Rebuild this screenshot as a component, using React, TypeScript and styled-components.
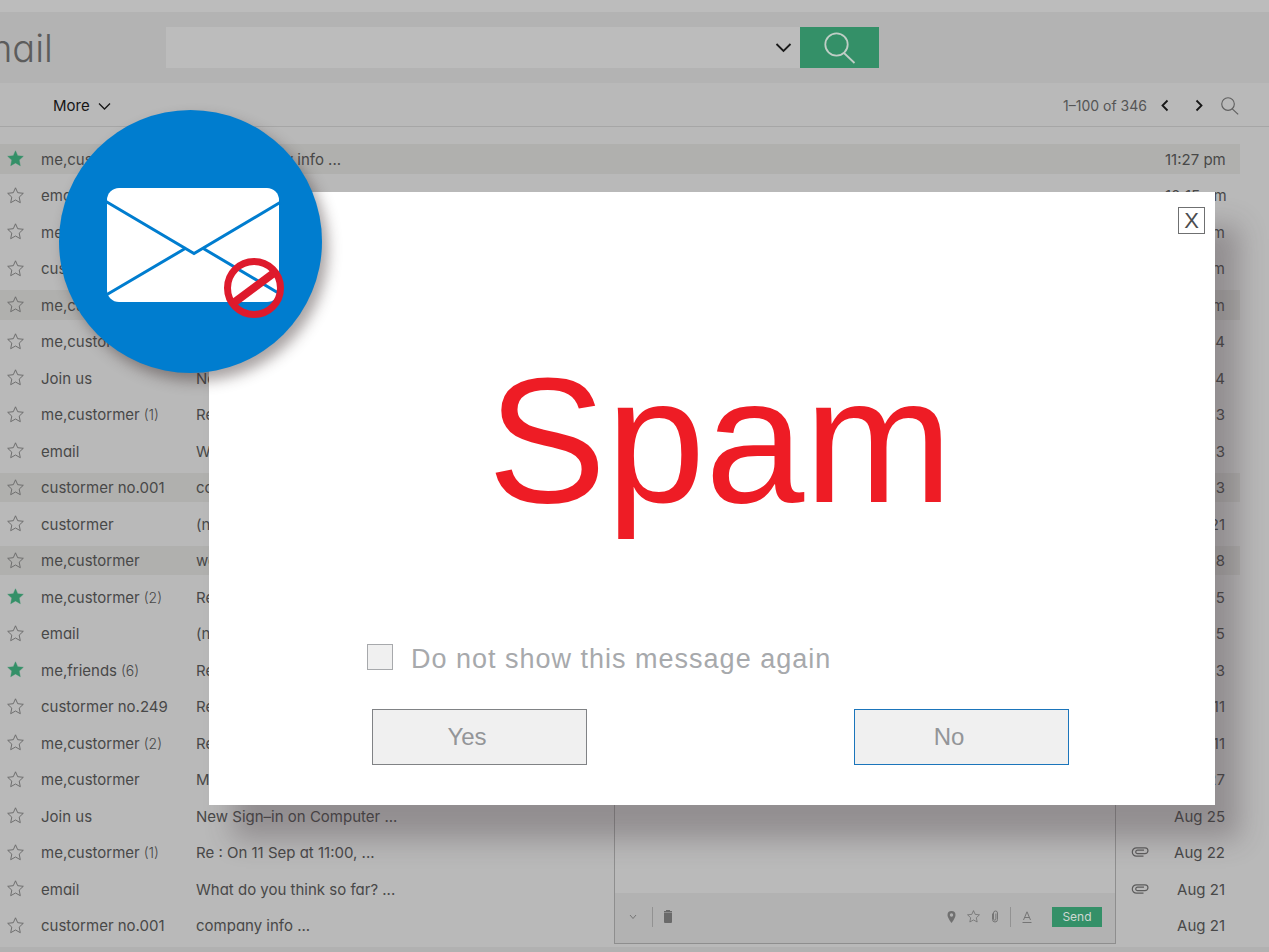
import React from "react";
import styled, { createGlobalStyle } from "styled-components";

const GlobalStyle = createGlobalStyle`
  * { box-sizing: border-box; }
  body {
    margin: 0;
    background: #b9b9b9;
    color: #484848;
    font-family: Inter, "Liberation Sans", sans-serif;
    font-feature-settings: "cv11";
    font-size: 15px;
    line-height: 20px;
  }
  button { font: inherit; color: inherit; font-feature-settings: inherit; }
`;

const Page = styled.div`
  position: relative;
  overflow: hidden;
  border-top: 12px solid #bcbcbc;
  border-bottom: 5px solid #b1b1b1;
`;

const Header = styled.header`
  display: flex;
  align-items: center;
  height: 71px;
  padding-right: 32px;
  background: #b3b3b3;
`;

const Logo = styled.div`
  display: flex;
  flex: 0 0 53px;
  justify-content: flex-end;
  margin-right: 113px;
  overflow: hidden;
  color: #5c5c5c;
  font-family: Inter, "Liberation Sans", sans-serif;
  font-size: 38px;
  font-weight: 300;
  line-height: 48px;
`;

const SearchForm = styled.form`
  display: flex;
  flex: 0 1 713px;
  height: 41px;
`;

const SearchField = styled.div`
  display: flex;
  flex: 1;
  align-items: center;
  padding-right: 8px;
  background: #bcbcbc;
`;

const SearchInput = styled.input`
  flex: 1;
  min-width: 0;
  height: 100%;
  padding: 0 12px;
  border: 0;
  outline: 0;
  background: transparent;
  font: inherit;
`;

const IconButton = styled.button`
  display: inline-flex;
  align-items: center;
  justify-content: center;
  padding: 0;
  border: 0;
  background: transparent;
`;

const SearchButton = styled(IconButton)`
  width: 79px;
  background: #349068;
`;

const Toolbar = styled.nav`
  display: flex;
  align-items: center;
  justify-content: space-between;
  height: 44px;
  padding: 2px 30px 0 53px;
  border-bottom: 1px solid #a6a6a6;
`;

const MoreButton = styled(IconButton)`
  gap: 8px;
  color: #161616;
`;

const Pager = styled.div`
  display: flex;
  align-items: center;
  color: #555;
  font-size: 14px;
`;

const PagerButtons = styled.div`
  display: flex;
  align-items: center;
  gap: 24px;
  margin: 0 17px 0 13px;
  color: #161616;
`;

const Mailbox = styled.main`
  position: relative;
  padding: 10px 29px 0 0;
`;

const MailTable = styled.table`
  width: 100%;
  height: 810px;
  border-collapse: separate;
  border-spacing: 0 7px;
  table-layout: fixed;
`;

const MailRow = styled.tr<{ $marked?: boolean }>`
  background: ${(p) => (p.$marked ? "#b0b0ae" : "transparent")};
`;

const Cell = styled.td<{ $align?: string }>`
  padding: 2px 0 0;
  text-align: ${(p) => p.$align || "left"};
  vertical-align: middle;
  white-space: nowrap;
`;

const StarCell = styled(Cell)`
  padding: 0 0 0 7px;
  line-height: 0;
`;

const DateCell = styled(Cell)`
  padding-right: 15px;
  text-align: right;
`;

const Count = styled.span`
  font-size: 14px;
  font-weight: 300;
`;

const Compose = styled.section`
  position: absolute;
  right: 153px;
  bottom: 3px;
  display: flex;
  flex-direction: column;
  width: 502px;
  height: 300px;
  border: 1px solid #8e8e8e;
  background: #bababa;
`;

const ComposeBody = styled.div`
  flex: 1;
`;

const ComposeBar = styled.div`
  display: flex;
  align-items: center;
  height: 50px;
  padding: 0 13px 3px 14px;
  background: #b2b2b2;
  color: #757575;
`;

const ComposeTools = styled.div`
  display: flex;
  align-items: center;
  gap: 11px;
  margin-left: auto;
`;

const Divider = styled.span`
  width: 1px;
  height: 20px;
  margin: 0 10px 0 15px;
  background: #929292;
`;

const ToolDivider = styled(Divider)`
  margin: 0;
`;

const SendButton = styled.button`
  width: 50px;
  height: 20px;
  margin-left: 20px;
  padding: 0;
  border: 0;
  background: #349068;
  color: #cfd8d3;
  font-size: 12px;
  line-height: 20px;
`;

const Overlay = styled.div`
  position: absolute;
  inset: 0;
  padding: 180px 54px 0 209px;
`;

const Dialog = styled.section`
  position: relative;
  display: flex;
  flex-direction: column;
  padding: 15px 10px 40px 158px;
  background: #fff;
  box-shadow: 24px 34px 26px rgba(66, 52, 58, 0.32);
  font-family: "Liberation Sans", Arial, sans-serif;
`;

const CloseButton = styled.button`
  align-self: flex-end;
  width: 27px;
  height: 27px;
  padding: 0;
  border: 1px solid #6f7071;
  background: #fff;
  color: #4c4d4f;
  font-size: 22px;
  line-height: 25px;
`;

const Title = styled.h1`
  margin: 107px 0 103px;
  padding-right: 132px;
  color: #ee1c25;
  font-size: 178px;
  font-weight: 400;
  line-height: 200px;
  text-align: center;
`;

const Remember = styled.label`
  display: flex;
  align-items: center;
  gap: 18px;
  color: #a7a9ac;
  font-size: 27px;
  letter-spacing: 1px;
  line-height: 28px;
`;

const CheckBox = styled.input`
  appearance: none;
  width: 26px;
  height: 26px;
  margin: 0 0 3px;
  border: 1px solid #a7a9ac;
  background: #f0f0f0;
`;

const Actions = styled.div`
  display: flex;
  justify-content: space-between;
  margin: 36px 136px 0 5px;
`;

const ActionButton = styled.button<{ $primary?: boolean }>`
  width: 215px;
  height: 56px;
  padding: 0 25px 0 0;
  border: 1px solid ${(p) => (p.$primary ? "#1b75bb" : "#808285")};
  background: #f0f0f0;
  color: #939598;
  font-size: 24px;
  line-height: 28px;
`;

const Badge = styled.div`
  position: absolute;
  top: -82px;
  left: -150px;
  width: 263px;
  height: 263px;
  border-radius: 50%;
  background: #007dcf;
  box-shadow: 6px 8px 14px rgba(50, 35, 35, 0.42);
`;

const Star = ({ filled, size = 17 }: { filled?: boolean; size?: number }) => (
  <svg width={size} height={size} viewBox="0 0 17 17" aria-hidden="true">
    <path
      d="M8.500 .8 10.700 5.700 16.300 6.300 12.200 10.100 13.300 15.700 8.500 13 3.700 15.700 4.800 10.100 .7 6.300 6.300 5.700Z"
      fill={filled ? "#349068" : "none"}
      stroke={filled ? "#349068" : "#666"}
      strokeWidth={filled ? 0.4 : 0.9}
    />
  </svg>
);

const Magnifier = ({ size, stroke, width }: { size: number; stroke: string; width: number }) => (
  <svg width={size} height={size} viewBox="0 0 32 32" fill="none" stroke={stroke} strokeWidth={width} aria-hidden="true">
    <circle cx="12.500" cy="12.500" r="11.200" />
    <path d="M20 21 30.500 31" />
  </svg>
);

const Chevron = ({ w, h, d, stroke = "currentColor", sw = 2 }: { w: number; h: number; d: string; stroke?: string; sw?: number }) => (
  <svg width={w} height={h} viewBox={`0 0 ${w} ${h}`} fill="none" stroke={stroke} strokeWidth={sw} aria-hidden="true">
    <path d={d} />
  </svg>
);

const Clip = () => (
  <svg width="18" height="12" viewBox="0 0 18 12" fill="none" stroke="#5c5c5c" strokeWidth="1.2" aria-hidden="true">
    <path d="M12.500 10.200H5.500a4.200 4.200 0 0 1 0-8.400H14a2.800 2.800 0 0 1 0 5.900H6.500a1.700 1.700 0 0 1 0-3.500H13" />
  </svg>
);

type Mail = { from: string; count?: number; subject: string; date: string; star?: boolean; marked?: boolean; clip?: boolean };

const mails: Mail[] = [
  { from: "me,custormer", subject: "Re : company info ...", date: "11:27 pm", star: true, marked: true },
  { from: "email", subject: "(no subject)", date: "10:15 pm" },
  { from: "me,custormer", subject: "Re : On 11 Sep at 11:00, ...", date: "9:40 pm" },
  { from: "custormer", subject: "company info ...", date: "8:12 pm" },
  { from: "me,custormer", subject: "welcome ...", date: "6:05 pm", marked: true },
  { from: "me,custormer", subject: "Meeting ...", date: "Sep 24" },
  { from: "Join us", subject: "New Sign–in on Computer ...", date: "Sep 24" },
  { from: "me,custormer", count: 1, subject: "Re : On 11 Sep at 11:00, ...", date: "Sep 23" },
  { from: "email", subject: "What do you think so far? ...", date: "Sep 23" },
  { from: "custormer no.001", subject: "company info ...", date: "Sep 23", marked: true },
  { from: "custormer", subject: "(no subject)", date: "Sep 21" },
  { from: "me,custormer", subject: "welcome ...", date: "Sep 18", marked: true },
  { from: "me,custormer", count: 2, subject: "Re : company info ...", date: "Sep 15", star: true },
  { from: "email", subject: "(no subject)", date: "Sep 15" },
  { from: "me,friends", count: 6, subject: "Re : Meeting ...", date: "Sep 13", star: true },
  { from: "custormer no.249", subject: "Re : company info ...", date: "Sep 11" },
  { from: "me,custormer", count: 2, subject: "Re : company info ...", date: "Sep 11" },
  { from: "me,custormer", subject: "Meeting ...", date: "Aug 27" },
  { from: "Join us", subject: "New Sign–in on Computer ...", date: "Aug 25" },
  { from: "me,custormer", count: 1, subject: "Re : On 11 Sep at 11:00, ...", date: "Aug 22", clip: true },
  { from: "email", subject: "What do you think so far? ...", date: "Aug 21", clip: true },
  { from: "custormer no.001", subject: "company info ...", date: "Aug 21" },
];

const StarColumn = styled.col`
  width: 41px;
`;

const SenderColumn = styled.col`
  width: 155px;
`;

const ClipColumn = styled.col`
  width: 50px;
`;

const DateColumn = styled.col`
  width: 75px;
`;

const MailList = () => (
  <MailTable>
    <colgroup>
      <StarColumn />
      <SenderColumn />
      <col />
      <ClipColumn />
      <DateColumn />
    </colgroup>
    <tbody>
      {mails.map((mail, i) => (
        <MailRow key={i} $marked={mail.marked}>
          <StarCell>
            <IconButton aria-label="Star">
              <Star filled={mail.star} />
            </IconButton>
          </StarCell>
          <Cell>
            {mail.from}
            {mail.count && <Count> ({mail.count})</Count>}
          </Cell>
          <Cell>{mail.subject}</Cell>
          <Cell $align="center">{mail.clip && <Clip />}</Cell>
          <DateCell>{mail.date}</DateCell>
        </MailRow>
      ))}
    </tbody>
  </MailTable>
);

const ComposePanel = () => (
  <Compose>
    <ComposeBody />
    <ComposeBar>
      <IconButton aria-label="More options">
        <Chevron w={8} h={6} d="M1 1 4 4.500 7 1" sw={1} />
      </IconButton>
      <Divider />
      <IconButton aria-label="Delete">
        <svg width="10" height="13" viewBox="0 0 10 13" fill="#6a6a6a" aria-hidden="true">
          <path d="M3 0h4v1h2v1.600H1V1H3ZM1 3h8V12a1 1 0 0 1-1 1H2a1 1 0 0 1-1-1Z" />
        </svg>
      </IconButton>
      <ComposeTools>
        <IconButton aria-label="Location">
          <svg width="9" height="12" viewBox="0 0 9 12" fill="#707070" fillRule="evenodd" aria-hidden="true">
            <path d="M4.500 0A4 4 0 0 1 8.500 4C8.500 7 4.500 12 4.500 12S.5 7 .5 4A4 4 0 0 1 4.500 0ZM4.500 2.300a1.700 1.700 0 1 0 0 3.400 1.700 1.700 0 0 0 0-3.400Z" />
          </svg>
        </IconButton>
        <IconButton aria-label="Star">
          <Star size={13} />
        </IconButton>
        <IconButton aria-label="Attach">
          <svg width="8" height="13" viewBox="0 0 8 13" fill="none" stroke="#757575" aria-hidden="true">
            <path d="M1.500 3.500V9.500a2.500 2.500 0 0 0 5 0V3a2 2 0 0 0-4 0V9a1.200 1.200 0 0 0 2.400 0V3.500" />
          </svg>
        </IconButton>
        <ToolDivider />
        <IconButton aria-label="Text style">
          <svg width="10" height="12" viewBox="0 0 10 12" fill="none" stroke="#757575" aria-hidden="true">
            <path d="M1.500 9 5 .8 8.500 9M2.700 6.500H7.300M.5 11.500H9.500" />
          </svg>
        </IconButton>
      </ComposeTools>
      <SendButton>Send</SendButton>
    </ComposeBar>
  </Compose>
);

const SpamBadge = () => (
  <Badge>
    <svg width="263" height="263" viewBox="0 1 263 263" fill="none" role="img" aria-label="Blocked mail">
      <rect x="48" y="79" width="172" height="114" rx="12" fill="#fff" />
      <g stroke="#007dcf" strokeWidth="3">
        <path d="M47 92.500 135 144.500 221 93.500" />
        <path d="M48 185.500 127 139M143.500 139 221 185" />
      </g>
      <g stroke="#de1a2c">
        <circle cx="195" cy="179" r="26.500" strokeWidth="7" />
        <path d="M174.500 194 215.500 163.500" strokeWidth="8" />
      </g>
    </svg>
  </Badge>
);

export default function App() {
  return (
    <Page>
      <GlobalStyle />
      <Header>
        <Logo>email</Logo>
        <SearchForm>
          <SearchField>
            <SearchInput type="text" aria-label="Search mail" />
            <IconButton type="button" aria-label="Search options">
              <Chevron w={17} h={11} d="M1.500 2 8.500 9 15.500 2" stroke="#1a1a1a" sw={1.8} />
            </IconButton>
          </SearchField>
          <SearchButton type="button" aria-label="Search">
            <Magnifier size={32} stroke="#c0cec6" width={1.8} />
          </SearchButton>
        </SearchForm>
      </Header>
      <Toolbar>
        <MoreButton>
          More
          <Chevron w={13} h={8} d="M1 1.500 6.500 7 12 1.500" sw={1.3} />
        </MoreButton>
        <Pager>
          1–100 of 346
          <PagerButtons>
            <IconButton aria-label="Previous page">
              <Chevron w={10} h={13} d="M7.500 1.500 2.500 6.500 7.500 11.500" sw={1.8} />
            </IconButton>
            <IconButton aria-label="Next page">
              <Chevron w={10} h={13} d="M2.500 1.500 7.500 6.500 2.500 11.500" sw={1.8} />
            </IconButton>
          </PagerButtons>
          <IconButton aria-label="Find">
            <Magnifier size={18} stroke="#5f5f5f" width={2} />
          </IconButton>
        </Pager>
      </Toolbar>
      <Mailbox>
        <MailList />
        <ComposePanel />
      </Mailbox>
      <Overlay>
        <Dialog role="dialog" aria-label="Spam">
          <CloseButton aria-label="Close">X</CloseButton>
          <Title>Spam</Title>
          <Remember>
            <CheckBox type="checkbox" />
            Do not show this message again
          </Remember>
          <Actions>
            <ActionButton>Yes</ActionButton>
            <ActionButton $primary>No</ActionButton>
          </Actions>
          <SpamBadge />
        </Dialog>
      </Overlay>
    </Page>
  );
}
